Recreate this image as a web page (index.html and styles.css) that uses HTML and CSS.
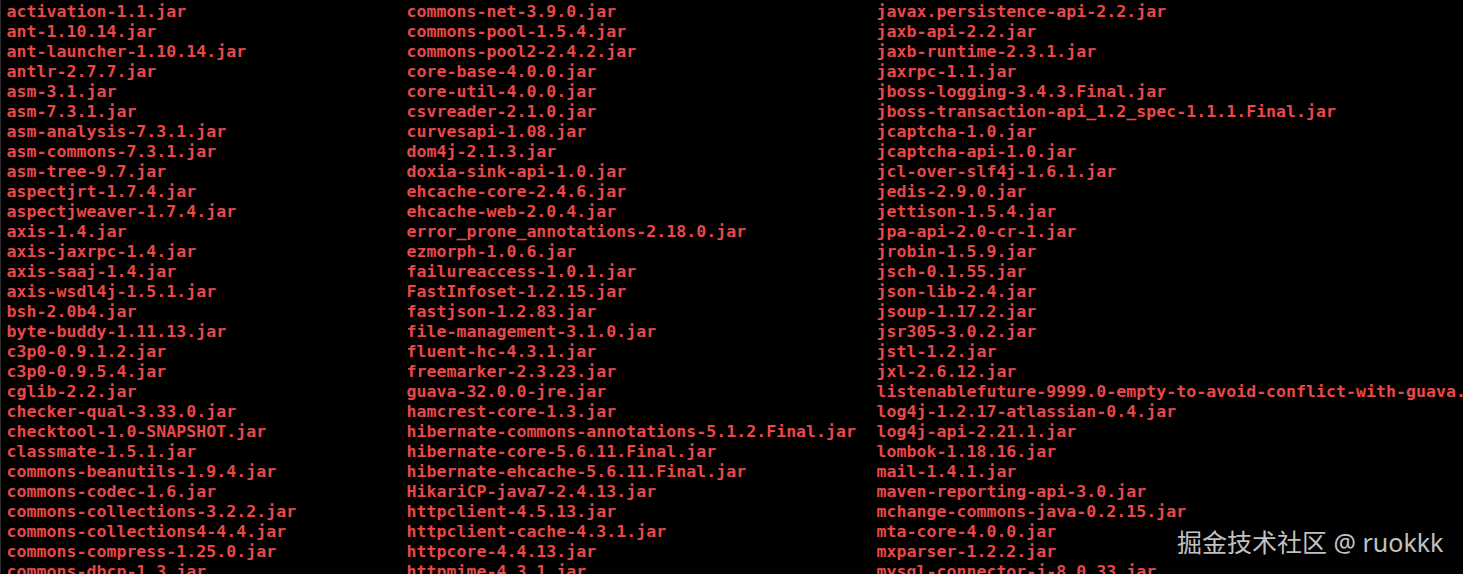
FILE: index.html
```html
<!DOCTYPE html>
<html lang="en">
<head>
<meta charset="utf-8">
<title>lib</title>
<link rel="stylesheet" href="styles.css">
</head>
<body>
<div class="screen">
  <div class="term">
    <div class="col c1">
      <div class="ln">accessors-smart-2.4.9.jar</div>
      <div class="ln">activation-1.1.jar</div>
      <div class="ln">ant-1.10.14.jar</div>
      <div class="ln">ant-launcher-1.10.14.jar</div>
      <div class="ln">antlr-2.7.7.jar</div>
      <div class="ln">asm-3.1.jar</div>
      <div class="ln">asm-7.3.1.jar</div>
      <div class="ln">asm-analysis-7.3.1.jar</div>
      <div class="ln">asm-commons-7.3.1.jar</div>
      <div class="ln">asm-tree-9.7.jar</div>
      <div class="ln">aspectjrt-1.7.4.jar</div>
      <div class="ln">aspectjweaver-1.7.4.jar</div>
      <div class="ln">axis-1.4.jar</div>
      <div class="ln">axis-jaxrpc-1.4.jar</div>
      <div class="ln">axis-saaj-1.4.jar</div>
      <div class="ln">axis-wsdl4j-1.5.1.jar</div>
      <div class="ln">bsh-2.0b4.jar</div>
      <div class="ln">byte-buddy-1.11.13.jar</div>
      <div class="ln">c3p0-0.9.1.2.jar</div>
      <div class="ln">c3p0-0.9.5.4.jar</div>
      <div class="ln">cglib-2.2.jar</div>
      <div class="ln">checker-qual-3.33.0.jar</div>
      <div class="ln">checktool-1.0-SNAPSHOT.jar</div>
      <div class="ln">classmate-1.5.1.jar</div>
      <div class="ln">commons-beanutils-1.9.4.jar</div>
      <div class="ln">commons-codec-1.6.jar</div>
      <div class="ln">commons-collections-3.2.2.jar</div>
      <div class="ln">commons-collections4-4.4.jar</div>
      <div class="ln">commons-compress-1.25.0.jar</div>
      <div class="ln">commons-dbcp-1.3.jar</div>
    </div>
    <div class="col c2">
      <div class="ln">commons-logging-1.2.jar</div>
      <div class="ln">commons-net-3.9.0.jar</div>
      <div class="ln">commons-pool-1.5.4.jar</div>
      <div class="ln">commons-pool2-2.4.2.jar</div>
      <div class="ln">core-base-4.0.0.jar</div>
      <div class="ln">core-util-4.0.0.jar</div>
      <div class="ln">csvreader-2.1.0.jar</div>
      <div class="ln">curvesapi-1.08.jar</div>
      <div class="ln">dom4j-2.1.3.jar</div>
      <div class="ln">doxia-sink-api-1.0.jar</div>
      <div class="ln">ehcache-core-2.4.6.jar</div>
      <div class="ln">ehcache-web-2.0.4.jar</div>
      <div class="ln">error_prone_annotations-2.18.0.jar</div>
      <div class="ln">ezmorph-1.0.6.jar</div>
      <div class="ln">failureaccess-1.0.1.jar</div>
      <div class="ln">FastInfoset-1.2.15.jar</div>
      <div class="ln">fastjson-1.2.83.jar</div>
      <div class="ln">file-management-3.1.0.jar</div>
      <div class="ln">fluent-hc-4.3.1.jar</div>
      <div class="ln">freemarker-2.3.23.jar</div>
      <div class="ln">guava-32.0.0-jre.jar</div>
      <div class="ln">hamcrest-core-1.3.jar</div>
      <div class="ln">hibernate-commons-annotations-5.1.2.Final.jar</div>
      <div class="ln">hibernate-core-5.6.11.Final.jar</div>
      <div class="ln">hibernate-ehcache-5.6.11.Final.jar</div>
      <div class="ln">HikariCP-java7-2.4.13.jar</div>
      <div class="ln">httpclient-4.5.13.jar</div>
      <div class="ln">httpclient-cache-4.3.1.jar</div>
      <div class="ln">httpcore-4.4.13.jar</div>
      <div class="ln">httpmime-4.3.1.jar</div>
    </div>
    <div class="col c3">
      <div class="ln">javax.inject-1.jar</div>
      <div class="ln">javax.persistence-api-2.2.jar</div>
      <div class="ln">jaxb-api-2.2.jar</div>
      <div class="ln">jaxb-runtime-2.3.1.jar</div>
      <div class="ln">jaxrpc-1.1.jar</div>
      <div class="ln">jboss-logging-3.4.3.Final.jar</div>
      <div class="ln">jboss-transaction-api_1.2_spec-1.1.1.Final.jar</div>
      <div class="ln">jcaptcha-1.0.jar</div>
      <div class="ln">jcaptcha-api-1.0.jar</div>
      <div class="ln">jcl-over-slf4j-1.6.1.jar</div>
      <div class="ln">jedis-2.9.0.jar</div>
      <div class="ln">jettison-1.5.4.jar</div>
      <div class="ln">jpa-api-2.0-cr-1.jar</div>
      <div class="ln">jrobin-1.5.9.jar</div>
      <div class="ln">jsch-0.1.55.jar</div>
      <div class="ln">json-lib-2.4.jar</div>
      <div class="ln">jsoup-1.17.2.jar</div>
      <div class="ln">jsr305-3.0.2.jar</div>
      <div class="ln">jstl-1.2.jar</div>
      <div class="ln">jxl-2.6.12.jar</div>
      <div class="ln">listenablefuture-9999.0-empty-to-avoid-conflict-with-guava.jar</div>
      <div class="ln">log4j-1.2.17-atlassian-0.4.jar</div>
      <div class="ln">log4j-api-2.21.1.jar</div>
      <div class="ln">lombok-1.18.16.jar</div>
      <div class="ln">mail-1.4.1.jar</div>
      <div class="ln">maven-reporting-api-3.0.jar</div>
      <div class="ln">mchange-commons-java-0.2.15.jar</div>
      <div class="ln">mta-core-4.0.0.jar</div>
      <div class="ln">mxparser-1.2.2.jar</div>
      <div class="ln">mysql-connector-j-8.0.33.jar</div>
    </div>
  </div>
  <div class="watermark">掘金技术社区 @ ruokkk</div>
</div>
</body>
</html>
```

FILE: styles.css
```css
html, body {
  margin: 0;
  padding: 0;
  background: #000;
  overflow: hidden;
  width: 1463px;
  height: 574px;
}

.screen {
  position: relative;
  width: 1463px;
  height: 574px;
  overflow: hidden;
  background: #000;
  border-left: 1px solid #2e2e2e;
  box-sizing: border-box;
}

.term {
  display: grid;
  grid-template-columns: 400px 470px 1fr;
  padding-left: 5.5px;
  margin-top: -18px;
  font-family: "DejaVu Sans Mono", "Liberation Mono", monospace;
  font-weight: bold;
  font-size: 16.6px;
  color: #e84848;
}

.col {
  display: flex;
  flex-direction: column;
  min-width: 0;
}

.ln {
  height: 20px;
  line-height: 20px;
  white-space: pre;
}

.watermark {
  position: absolute;
  left: 1176px;
  top: 526px;
  font-family: "Noto Sans", "Noto Sans CJK SC", sans-serif;
  font-size: 25px;
  line-height: 32px;
  color: rgba(230, 230, 230, 0.85);
  white-space: nowrap;
}
```
